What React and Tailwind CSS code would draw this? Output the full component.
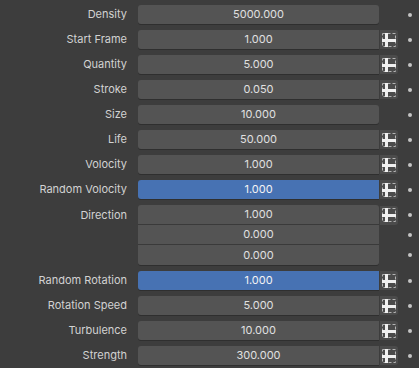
const rows = [
  { label: "Density", value: "5000.000", key: false },
  { label: "Start Frame", value: "1.000", key: true },
  { label: "Quantity", value: "5.000", key: true },
  { label: "Stroke", value: "0.050", key: true },
  { label: "Size", value: "10.000", key: false },
  { label: "Life", value: "50.000", key: true },
  { label: "Volocity", value: "1.000", key: true },
  { label: "Random Volocity", value: "1.000", key: true, active: true },
];

const rowsAfter = [
  { label: "Random Rotation", value: "1.000", key: true, active: true },
  { label: "Rotation Speed", value: "5.000", key: true },
  { label: "Turbulence", value: "10.000", key: true },
  { label: "Strength", value: "300.000", key: true },
];

const KeyIcon = () => (
  <div className="w-[18px] h-[19px] ml-px bg-[#4b4b4b] rounded-r-[3px] flex items-center justify-center">
    <svg width="18" height="18" viewBox="0 0 18 18">
      <rect
        x="2.5"
        y="2.5"
        width="13"
        height="13"
        fill="none"
        stroke="#b4b4b4"
        strokeWidth="1"
        strokeDasharray="3 2"
      />
      <rect x="5" y="2" width="3" height="14" fill="#f0f0f0" />
      <rect x="2" y="8" width="14" height="3" fill="#f0f0f0" />
    </svg>
  </div>
);

const Dot = () => (
  <div className="flex-1 flex items-center justify-center pl-[3px]">
    <span className="w-[4px] h-[4px] rounded-full bg-[#c4c4c4]" />
  </div>
);

const Row = ({ label, value, hasKey, active }) => (
  <div className="flex items-center h-[19px]">
    <div className="w-[128px] pr-px text-right text-[#d2d2d2]">{label}</div>
    <div className="w-[10px]" />
    <div
      className={`w-[241px] h-[19px] flex items-center justify-center ${
        active ? "bg-[#4772b3] text-[#f4f4f4]" : "bg-[#545454] text-[#e0e0e0]"
      } ${hasKey ? "rounded-l-[3px]" : "rounded-[3px]"} shadow-[0_1px_0_#2f2f2f]`}
    >
      {value}
    </div>
    {hasKey ? <KeyIcon /> : <div className="w-[19px]" />}
    <Dot />
  </div>
);

export default function App() {
  return (
    <div
      className="w-[419px] h-[368px] bg-[#3d3d3d] text-[11px] pt-[5px] flex flex-col gap-[6px] overflow-hidden"
      style={{ fontFamily: "Inter, 'DejaVu Sans', sans-serif" }}
    >
      {rows.map((r) => (
        <Row key={r.label} label={r.label} value={r.value} hasKey={r.key} active={r.active} />
      ))}
      <div className="flex">
        <div className="w-[138px] flex flex-col">
          <div className="h-[20px] flex items-center justify-end pr-[11px] text-[#d2d2d2]">
            Direction
          </div>
        </div>
        <div className="w-[241px] flex flex-col rounded-[3px] overflow-hidden shadow-[0_1px_0_#2f2f2f]">
          <div className="h-[20px] bg-[#545454] text-[#e0e0e0] flex items-center justify-center border-b border-[#3a3a3a]">
            1.000
          </div>
          <div className="h-[20px] bg-[#545454] text-[#e0e0e0] flex items-center justify-center border-b border-[#3a3a3a]">
            0.000
          </div>
          <div className="h-[20px] bg-[#545454] text-[#e0e0e0] flex items-center justify-center">
            0.000
          </div>
        </div>
        <div className="w-[19px] flex flex-col">
          <div className="h-[20px] flex items-center">
            <KeyIcon />
          </div>
        </div>
        <div className="flex-1 flex flex-col">
          <div className="h-[20px] flex"><Dot /></div>
          <div className="h-[20px] flex"><Dot /></div>
          <div className="h-[20px] flex"><Dot /></div>
        </div>
      </div>
      {rowsAfter.map((r) => (
        <Row key={r.label} label={r.label} value={r.value} hasKey={r.key} active={r.active} />
      ))}
    </div>
  );
}
